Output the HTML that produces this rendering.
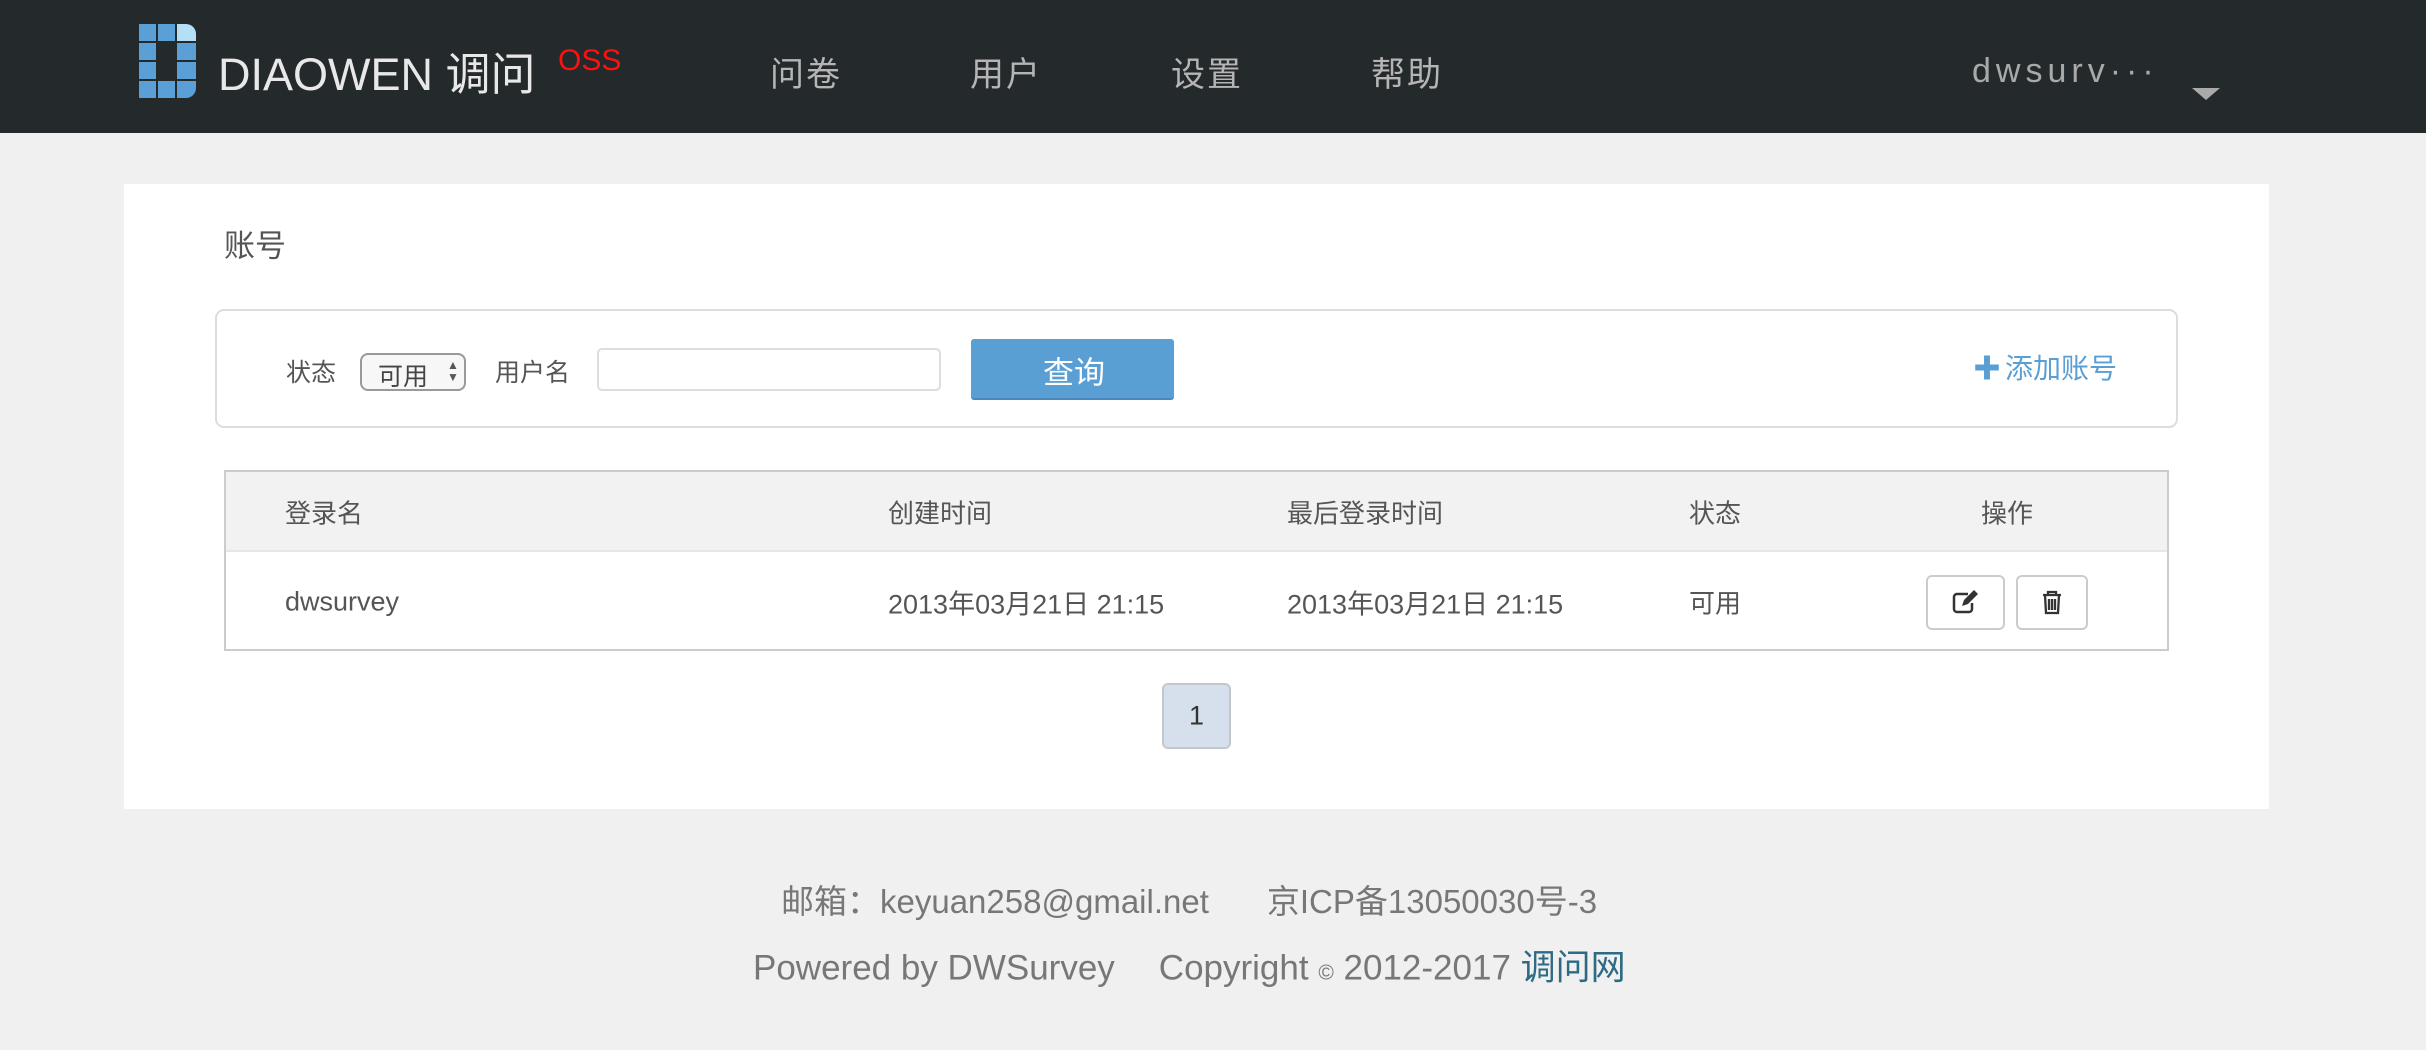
<!DOCTYPE html>
<html><head><meta charset="utf-8"><style>
*{margin:0;padding:0;box-sizing:border-box}
body{width:2426px;height:1050px;background:#f0f0f0;font-family:"Liberation Sans","Noto Sans CJK SC",sans-serif;position:relative;overflow:hidden;color:#555}
.a{position:absolute;white-space:nowrap}
.hdr{position:absolute;left:0;top:0;width:2426px;height:133px;background:#24292c}
.nav{color:#b5b5b5;font-size:34px;top:47px;letter-spacing:2px}
.panel{position:absolute;left:124px;top:184px;width:2145px;height:625px;background:#fff}
.c{position:absolute;transform:translateY(-50%);white-space:nowrap}
</style></head><body>
<div class="hdr">
 <svg class="a" style="left:139px;top:24px" width="57" height="74" viewBox="0 0 57 74">
  <g fill="#5aa0d6">
   <rect x="0" y="0" width="17" height="17"/><rect x="19" y="0" width="17" height="17"/><path d="M38 0h9a10 10 0 0 1 10 10v7h-19z" fill="#b4e0f7"/>
   <rect x="0" y="19" width="17" height="17"/><rect x="38" y="19" width="19" height="17"/>
   <rect x="0" y="38" width="17" height="17"/><rect x="38" y="38" width="19" height="17"/>
   <rect x="0" y="57" width="17" height="17"/><rect x="19" y="57" width="17" height="17"/><path d="M38 57h19v7a10 10 0 0 1-10 10h-9z"/>
  </g>
 </svg>
 <div class="a" style="left:218px;top:38px;font-size:45px;color:#e8e8e8;">DIAOWEN 调问</div>
 <div class="a" style="left:558px;top:44px;font-size:30px;color:#ff1010;">OSS</div>
 <div class="a nav" style="left:770px">问卷</div>
 <div class="a nav" style="left:970px">用户</div>
 <div class="a nav" style="left:1171px">设置</div>
 <div class="a nav" style="left:1371px">帮助</div>
 <div class="a" style="left:1972px;top:52px;font-size:34px;color:#a9a9a9;letter-spacing:5px">dwsurv···</div>
 <div class="a" style="left:2192px;top:88px;width:0;height:0;border-left:14px solid transparent;border-right:14px solid transparent;border-top:12px solid #aaa"></div>
</div>

<div class="panel"></div>
<div class="c" style="left:224px;top:243px;font-size:31px;color:#555">账号</div>

<div class="a" style="left:215px;top:309px;width:1963px;height:119px;border:2px solid #ddd;border-radius:9px"></div>
<div class="c" style="left:286px;top:371px;font-size:25px">状态</div>
<div class="a" style="left:360px;top:353px;width:106px;height:38px;border:2px solid #999;border-radius:8px;background:#f7f7f7"></div>
<div class="c" style="left:378px;top:375px;font-size:25px;color:#444">可用</div>
<div class="c" style="left:447px;top:371px;font-size:12px;color:#555;line-height:12px">▲<br>▼</div>
<div class="c" style="left:495px;top:371px;font-size:25px">用户名</div>
<div class="a" style="left:597px;top:348px;width:344px;height:43px;border:2px solid #ddd;border-radius:5px"></div>
<div class="a" style="left:971px;top:339px;width:203px;height:61px;background:#5a9fd4;border-radius:3px;border-bottom:2px solid #4a88bb"></div>
<div class="c" style="left:1043px;top:370px;font-size:31px;color:#fff">查询</div>
<div class="c" style="left:1973px;top:367px;font-size:28px;color:#5a9fd4;font-weight:bold">✚</div>
<div class="c" style="left:2005px;top:367px;font-size:28px;color:#5a9fd4">添加账号</div>

<div class="a" style="left:224px;top:470px;width:1945px;height:181px;border:2px solid #ccc;background:#fff"></div>
<div class="a" style="left:226px;top:472px;width:1941px;height:80px;background:#f2f2f2;border-bottom:2px solid #e6e6e6"></div>
<div class="c" style="left:285px;top:512px;font-size:26px">登录名</div>
<div class="c" style="left:888px;top:512px;font-size:26px">创建时间</div>
<div class="c" style="left:1287px;top:512px;font-size:26px">最后登录时间</div>
<div class="c" style="left:1689px;top:512px;font-size:26px">状态</div>
<div class="c" style="left:1981px;top:512px;font-size:26px">操作</div>
<div class="c" style="left:285px;top:602px;font-size:27px">dwsurvey</div>
<div class="c" style="left:888px;top:602px;font-size:27px">2013年03月21日 21:15</div>
<div class="c" style="left:1287px;top:602px;font-size:27px">2013年03月21日 21:15</div>
<div class="c" style="left:1689px;top:602px;font-size:26px">可用</div>
<div class="a" style="left:1926px;top:575px;width:79px;height:55px;border:2px solid #ccc;border-radius:6px;background:#fff"></div>
<svg class="a" style="left:1952px;top:590px" width="28" height="24" viewBox="0 0 28 24"><path d="M16 4H5a3 3 0 0 0-3 3v12a3 3 0 0 0 3 3h12a3 3 0 0 0 3-3v-6" fill="none" stroke="#333" stroke-width="2.5"/><path d="M10 16l2-6 10-10 4 4-10 10z" fill="#333"/></svg>
<div class="a" style="left:2016px;top:575px;width:72px;height:55px;border:2px solid #ccc;border-radius:6px;background:#fff"></div>
<svg class="a" style="left:2041px;top:589px" width="22" height="26" viewBox="0 0 22 26"><path d="M2 6h18M7 6V3h8v3M4 6l1 18h12l1-18M8 10v11M11 10v11M14 10v11" fill="none" stroke="#333" stroke-width="2.3"/></svg>

<div class="a" style="left:1162px;top:683px;width:69px;height:66px;background:#d5e0ec;border:2px solid #c4c8cc;border-radius:6px"></div>
<div class="c" style="left:1189px;top:716px;font-size:27px;color:#333">1</div>

<div class="c" style="left:781px;top:899px;font-size:33px;color:#777">邮箱：keyuan258@gmail.net<span style="display:inline-block;width:58px"></span>京ICP备13050030号-3</div>
<div class="c" style="left:753px;top:965px;font-size:35px;color:#777">Powered by DWSurvey<span style="display:inline-block;width:44px"></span>Copyright <span style="font-size:21px">©</span> 2012-2017 <span style="color:#2d6a83">调问网</span></div>
</body></html>
